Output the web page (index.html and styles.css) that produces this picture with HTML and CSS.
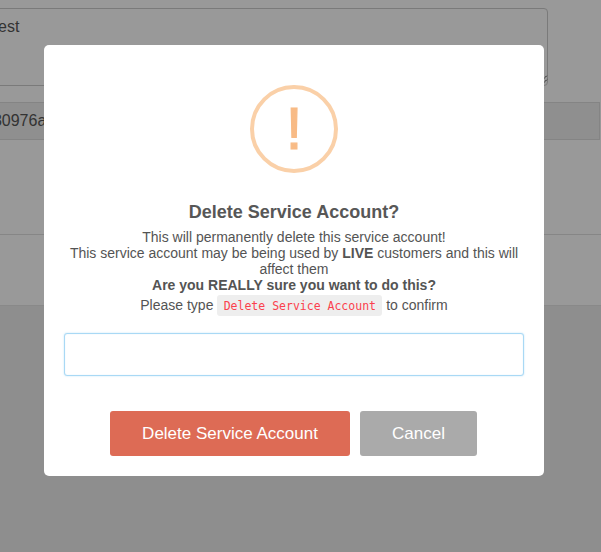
FILE: index.html
```html
<!DOCTYPE html>
<html lang="en">
<head>
<meta charset="utf-8">
<title>Delete Service Account</title>
<link rel="stylesheet" href="styles.css">
</head>
<body>
<main class="page">
  <div class="textarea-wrap">
    <div class="fake-textarea">
      <span class="fake-text">Test</span>
      <svg class="grip" width="4" height="8" viewBox="0 0 4 8"><path d="M0 7.500 3.500 4M0 3.500 3 .5" stroke="#000" stroke-width="1" stroke-dasharray="1.400 1" fill="none"/></svg>
    </div>
  </div>
  <div class="fake-input"><span class="fake-id">830976a</span></div>
  <div class="rule-block"></div>
  <div class="lower"></div>
</main>
<div class="overlay"></div>
<section class="modal">
  <div class="icon"><span class="bang">!</span></div>
  <h2 class="title">Delete Service Account?</h2>
  <div class="message">
    <div>This will permanently delete this service account!</div>
    <div>This service account may be being used by <b>LIVE</b> customers and this will affect them</div>
    <div><b>Are you REALLY sure you want to do this?</b></div>
    <div class="confirm-line">Please type <code class="chip">Delete Service Account</code> to confirm</div>
  </div>
  <input class="field" type="text" aria-label="Confirmation">
  <div class="actions">
    <button class="btn btn-danger" type="button">Delete Service Account</button>
    <button class="btn btn-cancel" type="button">Cancel</button>
  </div>
</section>
</body>
</html>
```
FILE: styles.css
```css
* { box-sizing: border-box; }
html, body { margin: 0; height: 100%; overflow: hidden; }
body {
  background: #fff;
  font-family: "Liberation Sans", Arial, sans-serif;
  color: #555;
}
.page { height: 552px; display: flex; flex-direction: column; overflow: hidden; }
.textarea-wrap { height: 102px; padding-top: 8px; }
.fake-textarea {
  position: relative;
  width: 576px;
  height: 78px;
  margin-left: -28px;
  padding: 6px 0 0 17px;
  border: 1px solid #ccc;
  border-radius: 4px;
  font-size: 16px;
  line-height: 24px;
}
.fake-text { color: #555; }
.grip { position: absolute; right: -1px; bottom: 2px; }
.fake-input {
  height: 38px;
  width: 640px;
  margin-left: -40px;
  padding-left: 23px;
  background: #eeeeee;
  border: 1px solid #ddd;
  font-size: 16px;
  line-height: 36px;
  color: #555;
}
.rule-block { flex: 0 0 95px; border-bottom: 1px solid #e0e0e0; }
.lower { flex: 1; margin-top: 70px; background: #ededed; border-top: 1px solid #e4e4e4; }
.overlay { position: fixed; inset: 0; background: rgba(0, 0, 0, 0.4); }
.modal {
  position: absolute;
  left: 44px;
  top: 45px;
  width: 500px;
  height: 431px;
  padding: 40px 20px 0;
  background: #fff;
  border-radius: 5px;
  text-align: center;
}
.icon {
  width: 88px;
  height: 88px;
  margin: 0 auto;
  border: 4px solid #fad0a8;
  border-radius: 50%;
  display: flex;
  align-items: center;
  justify-content: center;
}
.bang {
  font-size: 60px;
  line-height: 60px;
  color: #f8bb86;
  font-weight: 400;
  -webkit-text-stroke: 1.200px #f8bb86;
}
.title {
  margin: 29px 0 0;
  font-size: 18px;
  line-height: 20px;
  font-weight: 700;
  color: #575757;
}
.message { margin-top: 7px; font-size: 14px; line-height: 16px; color: #545454; }
.message b { font-weight: 700; }
.confirm-line { margin-top: 2px; line-height: 21px; }
.chip {
  display: inline-block;
  padding: 0 6px 0 6px;
  width: 165px;
  height: 21px;
  line-height: 22px;
  vertical-align: top;
  background: #eeeeee;
  border-radius: 3px;
  color: #fb3f4d;
  font-family: "DejaVu Sans Mono", monospace;
  font-size: 11.500px;
}
.field {
  display: block;
  width: 100%;
  height: 43px;
  margin-top: 17px;
  border: 1px solid #a9d9f5;
  border-radius: 3px;
  background: #fff;
  box-shadow: 0 0 2px rgba(169, 217, 245, 0.7), inset 0 0 1px rgba(169, 217, 245, 0.7);
  outline: none;
}
.actions { display: flex; justify-content: center; gap: 10px; margin-top: 35px; padding-right: 1px; }
.btn {
  height: 45px;
  border: 0;
  border-radius: 3px;
  color: #fff;
  font-family: inherit;
  font-size: 17px;
  padding: 0;
}
.btn-danger { width: 240px; background: #dd6b55; }
.btn-cancel { width: 117px; background: #aaaaaa; }
```
